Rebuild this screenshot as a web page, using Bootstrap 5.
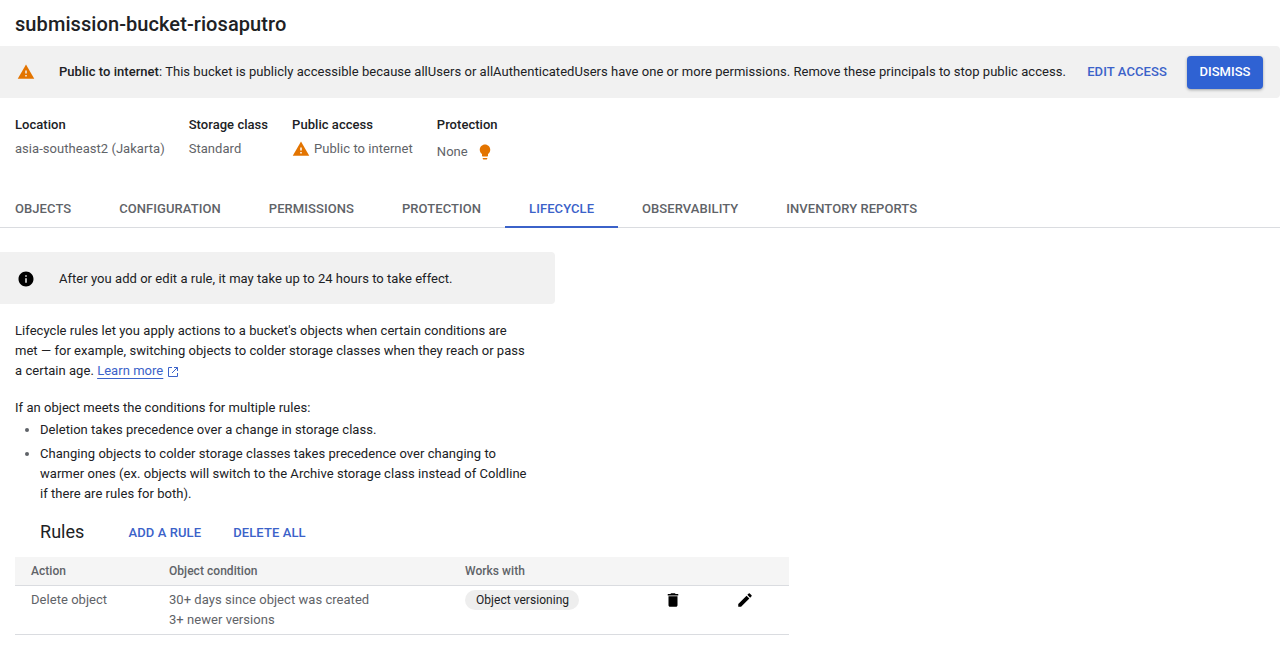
<!DOCTYPE html>
<html>

<head>
    <title>submission-bucket-riosaputro</title>
    <link href="https://cdn.jsdelivr.net/npm/bootstrap@5.3.1/dist/css/bootstrap.min.css" rel="stylesheet">
    <style>
        body { font-family: Roboto, "Liberation Sans", sans-serif; font-size: 13px; line-height: 20px; letter-spacing: .04px; color: #202124; background: #fff; overflow: hidden; }
        .page-title { font-size: 20px; font-weight: 500; line-height: 24px; letter-spacing: .08px; padding: 12px 15px 10px; margin: 0; color: #202124; }
        .notice-bar { background: #f1f1f1; height: 52px; border-radius: 0 4px 4px 0; padding: 0 17px 0 17px; }
        .notice-icon { width: 18px; height: 18px; flex: none; margin-right: 24px; }
        .notice-text { flex: 1; white-space: nowrap; }
        .notice-text strong { font-weight: 500; }
        .flat-link { font-size: 13px; font-weight: 500; color: #3b62c9; text-transform: uppercase; letter-spacing: .1px; text-decoration: none; background: none; border: 0; padding: 0; }
        .dismiss-btn { background: #2f62d3; color: #fff; font-size: 13px; font-weight: 500; border: 0; border-radius: 4px; height: 33px; width: 76px; margin-left: 20px; padding: 0; box-shadow: 0 1px 3px rgba(60,64,67,.45); }
        .facts { padding: 17px 15px 0; height: 91px; }
        .fact-label { font-weight: 500; margin-bottom: 4px; }
        .fact-value { color: #5f6368; }
        .fact-drop { padding-top: 3px; }
        .tabs-row { border-bottom: 1px solid #dadce0; height: 39px; padding-left: 15px; flex-wrap: nowrap; }
        .tabs-row .nav-link { color: #5f6368; font-weight: 500; font-size: 13px; letter-spacing: .07px; padding: 10px 24px 0; height: 39px; border-bottom: 2px solid transparent; white-space: nowrap; }
        .tabs-row .nav-item:first-child .nav-link { padding-left: 0; }
        .tabs-row .nav-link.active { color: #3b62c9; border-bottom-color: #3b62c9; }
        .info-box { background: #f1f1f1; width: 555px; height: 52px; border-radius: 0 4px 4px 0; margin-top: 24px; padding: 1px 0 0 17px; }
        .copy-block { width: 530px; padding-left: 15px; margin-top: 17px; }
        .copy-block p { margin-bottom: 17px; }
        .copy-block ul { margin: 2px 0 0; padding-left: 25px; }
        .copy-block li { margin-bottom: 4px; }
        .copy-block li::marker { color: #5f6368; }
        .learn-link { color: #3b62c9; text-decoration: underline; text-underline-offset: 3px; }
        .rules-head { padding-left: 40px; margin-top: 9px; margin-bottom: 7px; height: 37px; }
        .rules-title { font-size: 18px; font-weight: 400; margin: 0 44px 0 0; line-height: 24px; }
        .rules-link { margin-top: 2px; }
        .rules-table { width: 774px; margin: 0 0 0 15px; }
        .rules-table th { background: #f5f5f5; color: #5f6368; font-size: 12px; font-weight: 500; height: 28px; padding: 0 16px; vertical-align: middle; border-bottom: 1px solid #dadce0; }
        .rules-table td { color: #5f6368; padding: 4px 16px 4px; vertical-align: top; border-bottom: 1px solid #dadce0; height: 49px; }
        .chip-label { display: inline-block; background: #eeeeee; color: #202124; font-size: 12px; line-height: 20px; padding: 0 10px 0 11px; border-radius: 10px; }
    </style>
</head>

<body>
    <h1 class="page-title">submission-bucket-riosaputro</h1>

    <!-- public access warning -->
    <div class="notice-bar d-flex align-items-center">
        <svg class="notice-icon" viewBox="0 0 24 24"><path fill="#e37400" d="M1 21h22L12 2 1 21z"/><path fill="#f1f1f1" d="M13 18h-2v-2h2v2zm0-4h-2v-4h2v4z"/></svg>
        <div class="notice-text"><strong>Public to internet</strong>: This bucket is publicly accessible because allUsers or allAuthenticatedUsers have one or more permissions. Remove these principals to stop public access.</div>
        <a class="flat-link" href="#">Edit access</a>
        <button class="dismiss-btn" type="button">DISMISS</button>
    </div>

    <div class="facts d-flex">
        <div class="me-4">
            <div class="fact-label">Location</div>
            <div class="fact-value">asia-southeast2 (Jakarta)</div>
        </div>
        <div class="me-4">
            <div class="fact-label">Storage class</div>
            <div class="fact-value">Standard</div>
        </div>
        <div class="me-4">
            <div class="fact-label">Public access</div>
            <div class="fact-value d-flex align-items-center gap-1">
                <svg width="18" height="18" viewBox="0 0 24 24"><path fill="#e37400" d="M1 21h22L12 2 1 21z"/><path fill="#fff" d="M13 18h-2v-2h2v2zm0-4h-2v-4h2v4z"/></svg>
                Public to internet
            </div>
        </div>
        <div>
            <div class="fact-label">Protection</div>
            <div class="fact-value fact-drop d-flex align-items-center gap-2">
                None
                <svg width="18" height="18" viewBox="0 0 24 24"><path fill="#e37400" d="M9 21c0 .55.45 1 1 1h4c.55 0 1-.45 1-1v-1H9v1zm3-19C8.14 2 5 5.14 5 9c0 2.38 1.19 4.47 3 5.74V17c0 .55.45 1 1 1h6c.55 0 1-.45 1-1v-2.26c1.81-1.27 3-3.36 3-5.74 0-3.86-3.14-7-7-7z"/></svg>
            </div>
        </div>
    </div>

    <ul class="nav tabs-row">
        <li class="nav-item"><a class="nav-link" href="#">OBJECTS</a></li>
        <li class="nav-item"><a class="nav-link" href="#">CONFIGURATION</a></li>
        <li class="nav-item"><a class="nav-link" href="#">PERMISSIONS</a></li>
        <li class="nav-item"><a class="nav-link" href="#">PROTECTION</a></li>
        <li class="nav-item"><a class="nav-link active" href="#">LIFECYCLE</a></li>
        <li class="nav-item"><a class="nav-link" href="#">OBSERVABILITY</a></li>
        <li class="nav-item"><a class="nav-link" href="#">INVENTORY REPORTS</a></li>
    </ul>

    <div class="info-box d-flex align-items-center">
        <svg class="notice-icon" viewBox="0 0 24 24"><path fill="#000" d="M12 2C6.48 2 2 6.48 2 12s4.48 10 10 10 10-4.48 10-10S17.52 2 12 2zm1 15h-2v-6h2v6zm0-8h-2V7h2v2z"/></svg>
        <div>After you add or edit a rule, it may take up to 24 hours to take effect.</div>
    </div>

    <div class="copy-block">
        <p>Lifecycle rules let you apply actions to a bucket's objects when certain conditions are met — for example, switching objects to colder storage classes when they reach or pass a certain age. <a class="learn-link" href="#">Learn more</a><svg class="ms-1" width="12" height="12" viewBox="0 0 24 24" fill="none" stroke="#3b62c9" stroke-width="2"><path d="M10 3H3v18h18v-7M14 3h7v7M21 3L10 14"/></svg></p>
        <div>If an object meets the conditions for multiple rules:</div>
        <ul>
            <li>Deletion takes precedence over a change in storage class.</li>
            <li>Changing objects to colder storage classes takes precedence over changing to warmer ones (ex. objects will switch to the Archive storage class instead of Coldline if there are rules for both).</li>
        </ul>
    </div>

    <div class="rules-head d-flex align-items-center">
        <h2 class="rules-title">Rules</h2>
        <a class="flat-link rules-link me-4" href="#">Add a rule</a>
        <a class="flat-link rules-link ms-2" href="#">Delete all</a>
    </div>

    <table class="rules-table">
        <thead>
            <tr>
                <th style="width:138px">Action</th>
                <th style="width:296px">Object condition</th>
                <th style="width:199px">Works with</th>
                <th style="width:72px"></th>
                <th></th>
            </tr>
        </thead>
        <tbody>
            <tr>
                <td>Delete object</td>
                <td>30+ days since object was created<br>3+ newer versions</td>
                <td><span class="chip-label">Object versioning</span></td>
                <td><svg width="18" height="18" viewBox="0 0 24 24"><path fill="#000" d="M6 19c0 1.1.9 2 2 2h8c1.1 0 2-.9 2-2V7H6v12zM19 4h-3.5l-1-1h-5l-1 1H5v2h14V4z"/></svg></td>
                <td><svg width="18" height="18" viewBox="0 0 24 24"><path fill="#000" d="M3 17.25V21h3.75L17.81 9.94l-3.75-3.75L3 17.25zM20.71 7.04a1 1 0 0 0 0-1.41l-2.34-2.34a1 1 0 0 0-1.41 0l-1.83 1.83 3.75 3.75 1.83-1.83z"/></svg></td>
            </tr>
        </tbody>
    </table>

    <script src="https://cdn.jsdelivr.net/npm/bootstrap@5.3.1/dist/js/bootstrap.bundle.min.js"></script>
</body>

</html>
